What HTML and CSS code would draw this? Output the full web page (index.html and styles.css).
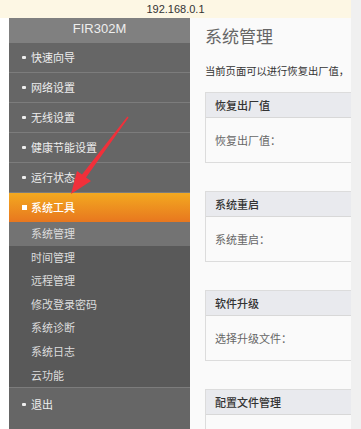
FILE: index.html
```html
<!DOCTYPE html>
<html lang="zh-CN">
<head>
    <meta charset="UTF-8">
    <meta name="viewport" content="width=device-width, initial-scale=1.0">
    <title>系统管理</title>
    <link rel="stylesheet" href="styles.css">
</head>
<body>
    <div class="window">
        <div class="address-bar">192.168.0.1</div>
        <div class="page">
            <div class="sidebar">
                <div class="brand">FIR302M</div>
                <div class="menu-item"><span class="dot"></span>快速向导</div>
                <div class="menu-item"><span class="dot"></span>网络设置</div>
                <div class="menu-item"><span class="dot"></span>无线设置</div>
                <div class="menu-item"><span class="dot"></span>健康节能设置</div>
                <div class="menu-item"><span class="dot"></span>运行状态</div>
                <div class="menu-item active"><span class="square"></span>系统工具</div>
                <div class="sub-menu">
                    <div class="sub-item current">系统管理</div>
                    <div class="sub-item">时间管理</div>
                    <div class="sub-item">远程管理</div>
                    <div class="sub-item">修改登录密码</div>
                    <div class="sub-item">系统诊断</div>
                    <div class="sub-item">系统日志</div>
                    <div class="sub-item">云功能</div>
                </div>
                <div class="menu-item logout"><span class="dot"></span>退出</div>
            </div>
            <div class="content">
                <h1>系统管理</h1>
                <p class="desc">当前页面可以进行恢复出厂值，</p>
                <div class="panel">
                    <div class="panel-head">恢复出厂值</div>
                    <div class="panel-body">恢复出厂值：</div>
                </div>
                <div class="panel">
                    <div class="panel-head">系统重启</div>
                    <div class="panel-body">系统重启：</div>
                </div>
                <div class="panel">
                    <div class="panel-head">软件升级</div>
                    <div class="panel-body">选择升级文件：</div>
                </div>
                <div class="panel">
                    <div class="panel-head">配置文件管理</div>
                    <div class="panel-body"></div>
                </div>
            </div>
        </div>
    </div>
    <div class="scroll-strip"></div>

    <!-- 红色标注箭头 -->
    <svg class="arrow" width="361" height="429" viewBox="0 0 361 429">
        <polygon points="128.6,117.4 127.4,116.6 82,174.5 77,171 71,194 91,181 86,177.5" fill="#f0303a"/>
    </svg>
</body>
</html>
```

FILE: styles.css
```css
* {
    margin: 0;
    padding: 0;
    box-sizing: border-box;
}
body {
    font-family: 'Liberation Sans', 'Noto Sans CJK SC', sans-serif;
    background: #ffffff;
    width: 361px;
    height: 429px;
    overflow: hidden;
    display: flex;
    position: relative;
}
.window {
    width: 351px;
    flex-shrink: 0;
    display: flex;
    flex-direction: column;
    overflow: hidden;
}
.address-bar {
    height: 18px;
    line-height: 18px;
    background: #fdf7e4;
    color: #333;
    font-size: 11px;
    text-align: center;
}
.page {
    flex: 1;
    min-height: 0;
    overflow: hidden;
    display: flex;
    padding-left: 9px;
}
.scroll-strip {
    width: 10px;
    flex-shrink: 0;
    background: #f0f0f0;
}

/* 左侧菜单 */
.sidebar {
    width: 181px;
    flex-shrink: 0;
    background: #666;
    display: flex;
    flex-direction: column;
    font-size: 11px;
    font-family: 'Noto Sans CJK SC', sans-serif;
}
.brand {
    height: 25px;
    line-height: 22px;
    background: #808080;
    color: #eee;
    text-align: center;
    font-size: 13px;
    font-family: 'Liberation Sans', sans-serif;
}
.menu-item {
    height: 30px;
    flex-shrink: 0;
    line-height: 29px;
    border-bottom: 1px solid #7c7c7c;
    color: #eee;
    display: flex;
    align-items: center;
    padding-left: 13px;
}
.menu-item .dot {
    width: 4px;
    height: 3px;
    background: #eee;
    border-radius: 1px;
    margin-right: 5px;
}
.menu-item.active {
    height: 29px;
    border-bottom: none;
    color: #fff;
    background: linear-gradient(#f3a920, #e8771f);
    font-weight: 500;
}
.menu-item .square {
    width: 5px;
    height: 5px;
    background: #fff;
    margin-right: 4px;
}
.sub-menu {
    background: #595959;
    flex-shrink: 0;
}
.sub-item {
    height: 23.6px;
    line-height: 23.6px;
    padding-left: 22px;
    color: #ddd;
}
.sub-item.current {
    background: #737373;
}
.menu-item.logout {
    border-bottom: none;
    border-top: 1px solid #7c7c7c;
    flex: 1;
    height: auto;
    align-items: flex-start;
    padding-top: 2px;
}
.menu-item.logout .dot {
    margin-top: 13px;
}

/* 右侧内容 */
.content {
    width: 161px;
    flex-shrink: 0;
    background: #fafafa;
    overflow: hidden;
    padding-left: 15px;
    font-family: 'Noto Sans CJK SC', sans-serif;
}
.content h1 {
    font-size: 17px;
    font-weight: 400;
    color: #666;
    line-height: 24px;
    margin-top: 6px;
    white-space: nowrap;
}
.desc {
    font-size: 10.3px;
    color: #333;
    white-space: nowrap;
    line-height: 14px;
    margin-top: 16px;
}
.panel {
    width: 200px;
    border: 1px solid #dcdcdc;
    border-right: none;
    margin-top: 28px;
    background: #fafafa;
}
.content .desc + .panel {
    margin-top: 14px;
}
.panel-head {
    height: 25px;
    line-height: 25px;
    background: #e9eaee;
    border-bottom: 1px solid #d8d8d8;
    padding-left: 9px;
    font-size: 11px;
    font-weight: 500;
    color: #333;
}
.panel-body {
    height: 44px;
    line-height: 44px;
    padding-left: 9px;
    font-size: 11px;
    color: #666;
}

.arrow {
    position: absolute;
    left: 0;
    top: 0;
    pointer-events: none;
}
```
